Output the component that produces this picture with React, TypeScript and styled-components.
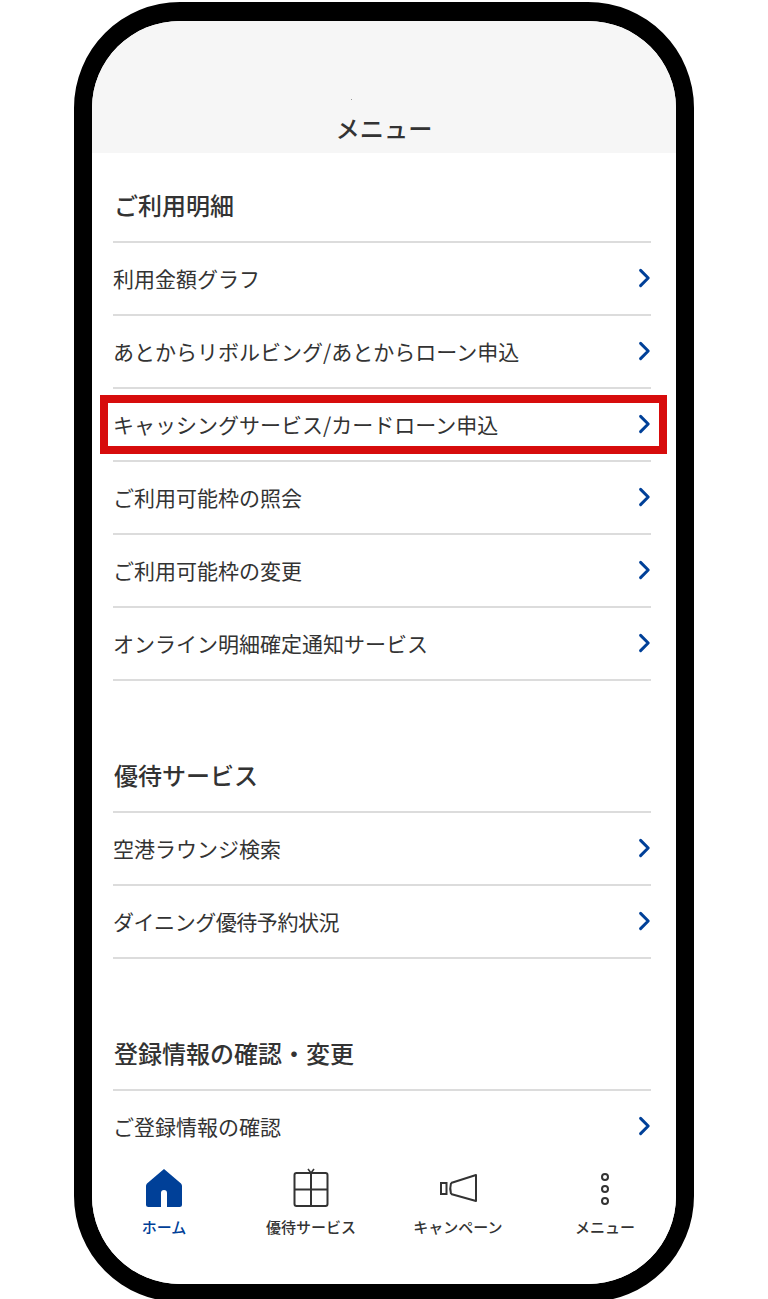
import React from 'react'
import styled, { createGlobalStyle } from 'styled-components'

const GlobalStyle = createGlobalStyle`
  html, body {
    margin: 0;
    padding: 0;
    background: #fff;
    height: 1299px;
    overflow: hidden;
    font-family: "Noto Sans CJK JP", "Noto Sans", sans-serif;
  }
`

const Page = styled.div`
  display: flex;
  justify-content: center;
  padding-top: 2px;
  width: 768px;
  height: 1297px;
  overflow: hidden;
`

const Phone = styled.div`
  position: relative;
  box-sizing: border-box;
  display: flex;
  flex-direction: column;
  flex-shrink: 0;
  width: 620px;
  height: 1300px;
  border: solid #000;
  border-width: 19px 18px 18px;
  border-radius: 106px;
  background: #fff;
  overflow: hidden;
`

const Header = styled.header`
  position: relative;
  display: flex;
  flex-shrink: 0;
  align-items: flex-end;
  justify-content: center;
  box-sizing: border-box;
  height: 132px;
  padding-bottom: 7px;
  background: #f6f6f6;
`

const Speck = styled.span`
  position: absolute;
  left: 259px;
  top: 78px;
  width: 1px;
  height: 1px;
  background: #999;
`

const Title = styled.h1`
  margin: 0;
  font-size: 24.2px;
  font-weight: 500;
  line-height: 36px;
  color: #333;
`

const Content = styled.main`
  flex: 1;
  min-height: 0;
  overflow: hidden;
  padding: 16px 25px 0 21px;
`

const Section = styled.section`
  margin-bottom: 58px;
`

const SectionTitle = styled.h2`
  display: flex;
  align-items: center;
  box-sizing: border-box;
  height: 74px;
  margin: 0;
  padding: 0 0 2px 1px;
  border-bottom: 2px solid #dcdcdc;
  font-size: 24px;
  font-weight: 500;
  color: #333;
`

const Row = styled.a`
  display: flex;
  align-items: center;
  justify-content: space-between;
  box-sizing: border-box;
  height: 73px;
  border-bottom: 2px solid #dcdcdc;
  font-size: 21px;
  line-height: 1;
  color: #333;
`

const RowLabel = styled.span<{ $tight?: boolean }>`
  letter-spacing: ${({ $tight }) => ($tight ? '-0.45px' : '0')};
`

const Chevron = styled.svg`
  flex-shrink: 0;
  width: 14px;
  height: 20px;
  margin-bottom: 1px;
  color: #004098;
`

const Highlight = styled.div`
  position: absolute;
  left: 8px;
  top: 374px;
  width: 567px;
  height: 59px;
  box-sizing: border-box;
  border: 8px solid #d70c0c;
`

const Nav = styled.nav`
  display: grid;
  flex-shrink: 0;
  grid-template-columns: 144px 150px 144px 150px;
  height: 134px;
  background: #fff;
`

const NavItem = styled.div<{ $active?: boolean }>`
  display: flex;
  flex-direction: column;
  align-items: center;
  padding-top: 18px;
  font-size: 15px;
  font-weight: 500;
  line-height: 20px;
  color: ${({ $active }) => ($active ? '#004098' : '#333')};
  svg {
    display: block;
    width: 40px;
    height: 40px;
    margin-bottom: 9px;
  }
`

const ChevronIcon = () => (
  <Chevron viewBox="0 0 14 20" fill="none">
    <path d="M3.6 2.4 L11.2 10 L3.6 17.6" stroke="currentColor" strokeWidth="3" strokeLinecap="round" strokeLinejoin="round" />
  </Chevron>
)

const HomeIcon = () => (
  <svg viewBox="0 0 40 40">
    <path
      fill="#004098"
      d="M20 1 L37 15.5 Q38 16.5 38 18 V36.5 Q38 39 35.5 39 H23 V25 Q23 22 20 22 Q17 22 17 25 V39 H4.5 Q2 39 2 36.5 V18 Q2 16.5 3 15.5 Z"
    />
  </svg>
)

const GiftIcon = () => (
  <svg viewBox="0 0 40 40" fill="none" stroke="#333" strokeWidth="2">
    <rect x="3.5" y="5" width="33" height="33" rx="2" />
    <path d="M20 5 V38 M3.5 21.5 H36.5" />
    <path d="M17 1 L20 5 L23 1" strokeWidth="1.6" />
  </svg>
)

const CampaignIcon = () => (
  <svg viewBox="0 0 40 40" fill="none" stroke="#333" strokeWidth="2">
    <rect x="3" y="15" width="5.5" height="11" />
    <path d="M13 15 L38 7 V33 L13 26 M13 15 Q11.5 20.5 13 26" strokeLinejoin="round" />
  </svg>
)

const MenuIcon = () => (
  <svg viewBox="0 0 40 40" fill="none" stroke="#333" strokeWidth="2">
    <circle cx="20" cy="9" r="3" />
    <circle cx="20" cy="21" r="3" />
    <circle cx="20" cy="33" r="3" />
  </svg>
)

const usage = [
  '利用金額グラフ',
  'あとからリボルビング/あとからローン申込',
  'キャッシングサービス/カードローン申込',
  'ご利用可能枠の照会',
  'ご利用可能枠の変更',
  'オンライン明細確定通知サービス',
]

const MenuRow: React.FC<{ label: string; tight?: boolean }> = ({ label, tight }) => (
  <Row>
    <RowLabel $tight={tight}>{label}</RowLabel>
    <ChevronIcon />
  </Row>
)

const App: React.FC = () => (
  <Page>
    <GlobalStyle />
    <Phone>
      <Header>
        <Speck />
        <Title>メニュー</Title>
      </Header>
      <Content>
        <Section>
          <SectionTitle>ご利用明細</SectionTitle>
          {usage.map((label) => (
            <MenuRow key={label} label={label} />
          ))}
        </Section>
        <Section>
          <SectionTitle>優待サービス</SectionTitle>
          <MenuRow label="空港ラウンジ検索" />
          <MenuRow label="ダイニング優待予約状況" tight />
        </Section>
        <Section>
          <SectionTitle>登録情報の確認・変更</SectionTitle>
          <MenuRow label="ご登録情報の確認" />
        </Section>
      </Content>
      <Highlight />
      <Nav>
        <NavItem $active>
          <HomeIcon />
          ホーム
        </NavItem>
        <NavItem>
          <GiftIcon />
          優待サービス
        </NavItem>
        <NavItem>
          <CampaignIcon />
          キャンペーン
        </NavItem>
        <NavItem>
          <MenuIcon />
          メニュー
        </NavItem>
      </Nav>
    </Phone>
  </Page>
)

export default App
